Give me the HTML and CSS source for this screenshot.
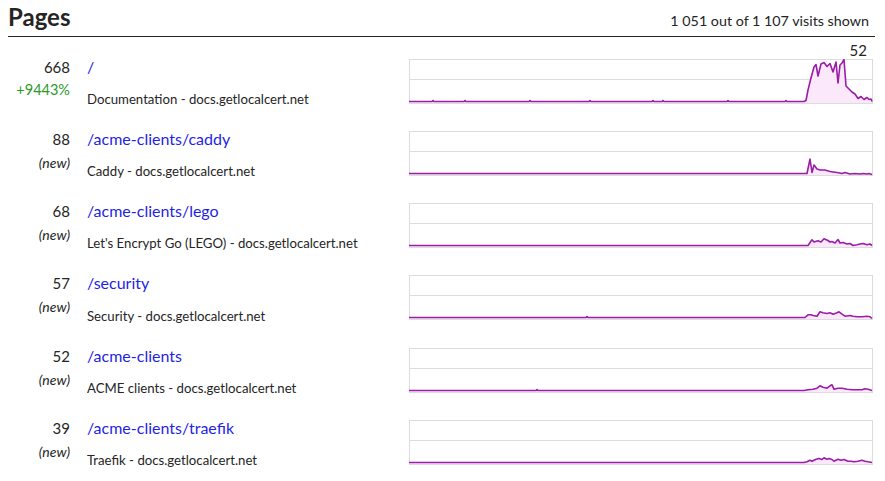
FILE: index.html
```html
<!DOCTYPE html>
<html>
<head>
<meta charset="utf-8">
<link rel="stylesheet" href="styles.css">
</head>
<body>
<div class="widget">
  <div class="header">
    <h2 class="title">Pages</h2>
    <span class="shown">1 051 out of 1 107 visits shown</span>
  </div>
  <div class="rows">
    <div class="row">
      <div class="col-count">
        <div class="count">668</div>
        <div class="change up">+9443%</div>
      </div>
      <div class="col-info">
        <a class="path" href="#">/</a>
        <div class="ptitle">Documentation - docs.getlocalcert.net</div>
      </div>
      <div class="chart">
        <span class="chart-max">52</span>
        <svg width="464" height="45" viewBox="0 0 464 45">
          <rect x="0.5" y="0.5" width="463" height="44" class="frame"/>
          <line x1="0" y1="20.5" x2="464" y2="20.5" class="grid"/>
          <polygon class="fill" points="0,42.5 23,42.5 24,41.5 25,42.5 55,42.5 56,41.5 57,42.5 120,42.5 121,41.5 122,42.5 180,42.5 181,41.5 182,42.5 243,42.5 244,41.5 245,42.5 253,42.5 254,41.5 255,42.5 318,42.5 319,41.5 320,42.5 376,42.5 377,41.5 378,42.5 395,42.5 397,41.5 399,31 402,19 405,8 407,5.5 409,17 412,5 415,3.5 418,7.5 421,4.5 424,13 427,3 429,24 431,6 433,4 435,0.5 437,27 440,30 443,33 446,35 449,39.5 452,37.5 455,40.5 458,38.5 460,40.5 462,40 463,42.5 463,44 0,44"/>
          <polyline class="line" points="0,42.5 23,42.5 24,41.5 25,42.5 55,42.5 56,41.5 57,42.5 120,42.5 121,41.5 122,42.5 180,42.5 181,41.5 182,42.5 243,42.5 244,41.5 245,42.5 253,42.5 254,41.5 255,42.5 318,42.5 319,41.5 320,42.5 376,42.5 377,41.5 378,42.5 395,42.5 397,41.5 399,31 402,19 405,8 407,5.5 409,17 412,5 415,3.5 418,7.5 421,4.5 424,13 427,3 429,24 431,6 433,4 435,0.5 437,27 440,30 443,33 446,35 449,39.5 452,37.5 455,40.5 458,38.5 460,40.5 462,40 463,42.5"/>
        </svg>
      </div>
    </div>

    <div class="row">
      <div class="col-count">
        <div class="count">88</div>
        <div class="change">(new)</div>
      </div>
      <div class="col-info">
        <a class="path" href="#">/acme-clients/caddy</a>
        <div class="ptitle">Caddy - docs.getlocalcert.net</div>
      </div>
      <div class="chart">
        <svg width="464" height="45" viewBox="0 0 464 45">
          <rect x="0.5" y="0.5" width="463" height="44" class="frame"/>
          <line x1="0" y1="20.5" x2="464" y2="20.5" class="grid"/>
          <polygon class="fill" points="0,42.5 398,42.5 401,28 403,41.5 405,34 408,38 411,39 416,39 421,40.5 428,41.5 433,42.5 436,41.5 441,43 446,42.5 451,43 454,42.5 458,43 460,42.5 463,43.5 463,44 0,44"/>
          <polyline class="line" points="0,42.5 398,42.5 401,28 403,41.5 405,34 408,38 411,39 416,39 421,40.5 428,41.5 433,42.5 436,41.5 441,43 446,42.5 451,43 454,42.5 458,43 460,42.5 463,43.5"/>
        </svg>
      </div>
    </div>

    <div class="row">
      <div class="col-count">
        <div class="count">68</div>
        <div class="change">(new)</div>
      </div>
      <div class="col-info">
        <a class="path" href="#">/acme-clients/lego</a>
        <div class="ptitle">Let's Encrypt Go (LEGO) - docs.getlocalcert.net</div>
      </div>
      <div class="chart">
        <svg width="464" height="45" viewBox="0 0 464 45">
          <rect x="0.5" y="0.5" width="463" height="44" class="frame"/>
          <line x1="0" y1="20.5" x2="464" y2="20.5" class="grid"/>
          <polygon class="fill" points="0,42.5 399,42.5 403,36.8 405,39 409,37.8 412,39 415,35.8 419,37.5 421,39 423,38.5 426,40 429,36.5 431,40 434,39.5 438,41 441,40.5 444,42.5 448,41.8 451,41 454,40.5 458,41.8 461,41 463,42.5 463,44 0,44"/>
          <polyline class="line" points="0,42.5 399,42.5 403,36.8 405,39 409,37.8 412,39 415,35.8 419,37.5 421,39 423,38.5 426,40 429,36.5 431,40 434,39.5 438,41 441,40.5 444,42.5 448,41.8 451,41 454,40.5 458,41.8 461,41 463,42.5"/>
        </svg>
      </div>
    </div>

    <div class="row">
      <div class="col-count">
        <div class="count">57</div>
        <div class="change">(new)</div>
      </div>
      <div class="col-info">
        <a class="path" href="#">/security</a>
        <div class="ptitle">Security - docs.getlocalcert.net</div>
      </div>
      <div class="chart">
        <svg width="464" height="45" viewBox="0 0 464 45">
          <rect x="0.5" y="0.5" width="463" height="44" class="frame"/>
          <line x1="0" y1="20.5" x2="464" y2="20.5" class="grid"/>
          <polygon class="fill" points="0,42.5 177,42.5 178,41.5 179,42.5 396,42.5 399,39.8 402,39.8 404,40.5 408,41.2 411,36.8 414,37.8 418,38.5 421,37.8 424,39.2 428,37.8 430,36.8 433,39.2 436,41.2 441,40.5 444,41.2 448,41.8 453,41.8 458,41.2 461,41.8 463,43.5 463,44 0,44"/>
          <polyline class="line" points="0,42.5 177,42.5 178,41.5 179,42.5 396,42.5 399,39.8 402,39.8 404,40.5 408,41.2 411,36.8 414,37.8 418,38.5 421,37.8 424,39.2 428,37.8 430,36.8 433,39.2 436,41.2 441,40.5 444,41.2 448,41.8 453,41.8 458,41.2 461,41.8 463,43.5"/>
        </svg>
      </div>
    </div>

    <div class="row">
      <div class="col-count">
        <div class="count">52</div>
        <div class="change">(new)</div>
      </div>
      <div class="col-info">
        <a class="path" href="#">/acme-clients</a>
        <div class="ptitle">ACME clients - docs.getlocalcert.net</div>
      </div>
      <div class="chart">
        <svg width="464" height="45" viewBox="0 0 464 45">
          <rect x="0.5" y="0.5" width="463" height="44" class="frame"/>
          <line x1="0" y1="20.5" x2="464" y2="20.5" class="grid"/>
          <polygon class="fill" points="0,42.5 127,42.5 128,41.5 129,42.5 395,42.5 399,41.8 404,41.2 408,40.2 411,37.8 414,39.2 418,40.2 421,37.8 423,36.8 425,41.2 429,40.2 433,40.2 438,41.2 444,41.8 453,41.8 456,40.8 459,41.2 463,42.5 463,44 0,44"/>
          <polyline class="line" points="0,42.5 127,42.5 128,41.5 129,42.5 395,42.5 399,41.8 404,41.2 408,40.2 411,37.8 414,39.2 418,40.2 421,37.8 423,36.8 425,41.2 429,40.2 433,40.2 438,41.2 444,41.8 453,41.8 456,40.8 459,41.2 463,42.5"/>
        </svg>
      </div>
    </div>

    <div class="row">
      <div class="col-count">
        <div class="count">39</div>
        <div class="change">(new)</div>
      </div>
      <div class="col-info">
        <a class="path" href="#">/acme-clients/traefik</a>
        <div class="ptitle">Traefik - docs.getlocalcert.net</div>
      </div>
      <div class="chart">
        <svg width="464" height="45" viewBox="0 0 464 45">
          <rect x="0.5" y="0.5" width="463" height="44" class="frame"/>
          <line x1="0" y1="20.5" x2="464" y2="20.5" class="grid"/>
          <polygon class="fill" points="0,42.5 395,42.5 398,41.8 401,40.2 403,41.2 407,39.2 410,38.5 413,39.5 415,37.8 418,39.2 420,38.5 423,39.5 425,41.2 429,39.2 432,40.2 435,39.5 439,41.2 442,41.2 445,41.8 449,41.2 453,40.2 456,41.2 459,41.8 463,42.5 463,44 0,44"/>
          <polyline class="line" points="0,42.5 395,42.5 398,41.8 401,40.2 403,41.2 407,39.2 410,38.5 413,39.5 415,37.8 418,39.2 420,38.5 423,39.5 425,41.2 429,39.2 432,40.2 435,39.5 439,41.2 442,41.2 445,41.8 449,41.2 453,40.2 456,41.2 459,41.8 463,42.5"/>
        </svg>
      </div>
    </div>
  </div>
</div>
</body>
</html>
```

FILE: styles.css
```css
html, body {
  margin: 0;
  padding: 0;
  background: #fff;
}
body {
  font-family: Lato, "Noto Sans", sans-serif;
  color: #252525;
  padding: 5px 10px 0 8px;
}
.widget {
  width: 867px;
}
.header {
  display: flex;
  justify-content: space-between;
  align-items: baseline;
  border-bottom: 1px solid #252525;
  padding-bottom: 7px;
}
.title {
  margin: 0;
  font-size: 24px;
  line-height: 24px;
  font-weight: 700;
}
.shown {
  font-size: 14.3px;
  padding-right: 6px;
}
.rows {
  padding-top: 21.5px;
}
.row {
  display: flex;
  align-items: flex-start;
  height: 72.33px;
}
.col-count {
  width: 62px;
  text-align: right;
  flex: none;
}
.count {
  font-size: 15px;
  line-height: 16px;
}
.change {
  font-size: 14px;
  line-height: 16px;
  margin-top: 8px;
  font-style: italic;
}
.change.up {
  font-style: normal;
  font-size: 14.5px;
  color: #2a9a2a;
  margin-top: 7px;
}
.col-info {
  flex: none;
  width: 305px;
  margin-left: 17px;
  margin-right: 17px;
}
.path {
  display: block;
  font-size: 16px;
  line-height: 16px;
  color: #1f1fe6;
  text-decoration: none;
}
.ptitle {
  font-size: 13.2px;
  line-height: 16px;
  margin-top: 16.2px;
  white-space: nowrap;
}
.chart {
  position: relative;
  flex: none;
  width: 464px;
  height: 45px;
}
.chart svg {
  display: block;
}
.chart-max {
  position: absolute;
  right: 6px;
  bottom: calc(100% + 1px);
  font-size: 15px;
  line-height: 15px;
}
.frame {
  fill: #fff;
  stroke: #dcdcdc;
  stroke-width: 1;
}
.grid {
  stroke: #dcdcdc;
  stroke-width: 1;
}
.fill {
  fill: #fce8fb;
  stroke: none;
}
.line {
  fill: none;
  stroke: #9b1ca8;
  stroke-width: 1.6;
  stroke-linejoin: round;
}
```
